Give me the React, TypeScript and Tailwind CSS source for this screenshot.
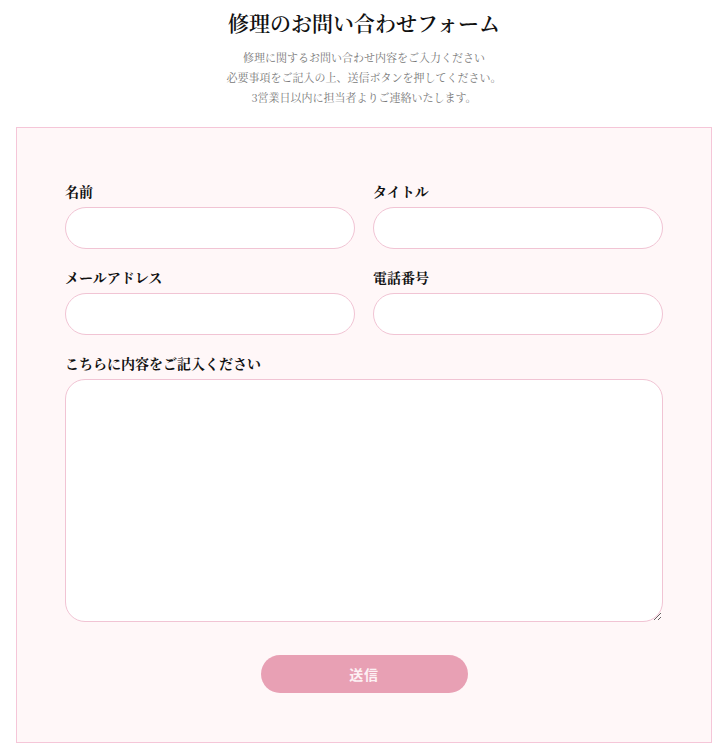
const fieldClass =
  "h-[42px] w-full rounded-full border border-[#f1c4d4] bg-white px-5 text-[14px] outline-none";

function Field({ label, children }: { label: string; children: React.ReactNode }) {
  return (
    <div className="flex flex-col gap-[6px]">
      <label className="text-[14px] font-bold leading-[20px] text-[#111]">{label}</label>
      {children}
    </div>
  );
}

export default function App() {
  return (
    <div
      className="w-full bg-white pt-[8px] pb-[8px]"
      style={{ fontFamily: '"Noto Serif CJK JP", "Noto Sans CJK JP", serif' }}
    >
      <h1 className="text-center text-[21px] font-semibold leading-[28px] text-[#111]">
        修理のお問い合わせフォーム
      </h1>
      <p className="mt-[11px] text-center text-[11px] leading-[20px] text-[#777]">
        修理に関するお問い合わせ内容をご入力ください
        <br />
        必要事項をご記入の上、送信ボタンを押してください。
        <br />
        3営業日以内に担当者よりご連絡いたします。
      </p>

      <form className="mx-[16px] mt-[20px] border border-[#f5c6d8] bg-[#fff7f8] px-[48px] pt-[53px] pb-[49px]">
        <div className="grid grid-cols-2 gap-x-[18px] gap-y-[18px]">
          <Field label="名前">
            <input className={fieldClass} />
          </Field>
          <Field label="タイトル">
            <input className={fieldClass} />
          </Field>
          <Field label="メールアドレス">
            <input className={fieldClass} />
          </Field>
          <Field label="電話番号">
            <input className={fieldClass} />
          </Field>
          <div className="col-span-2">
            <Field label="こちらに内容をご記入ください">
              <textarea className="h-[243px] w-full rounded-[20px] border border-[#f1c4d4] bg-white px-5 py-3 text-[14px] outline-none" />
            </Field>
          </div>
        </div>

        <div className="mt-[33px] flex justify-center">
          <button
            type="button"
            className="h-[38px] w-[207px] rounded-full bg-[#e8a0b4] text-[14px] font-bold tracking-wider text-[#fdf1f4]"
            style={{ fontFamily: '"Noto Sans CJK JP", sans-serif' }}
          >
            送信
          </button>
        </div>
      </form>
    </div>
  );
}
